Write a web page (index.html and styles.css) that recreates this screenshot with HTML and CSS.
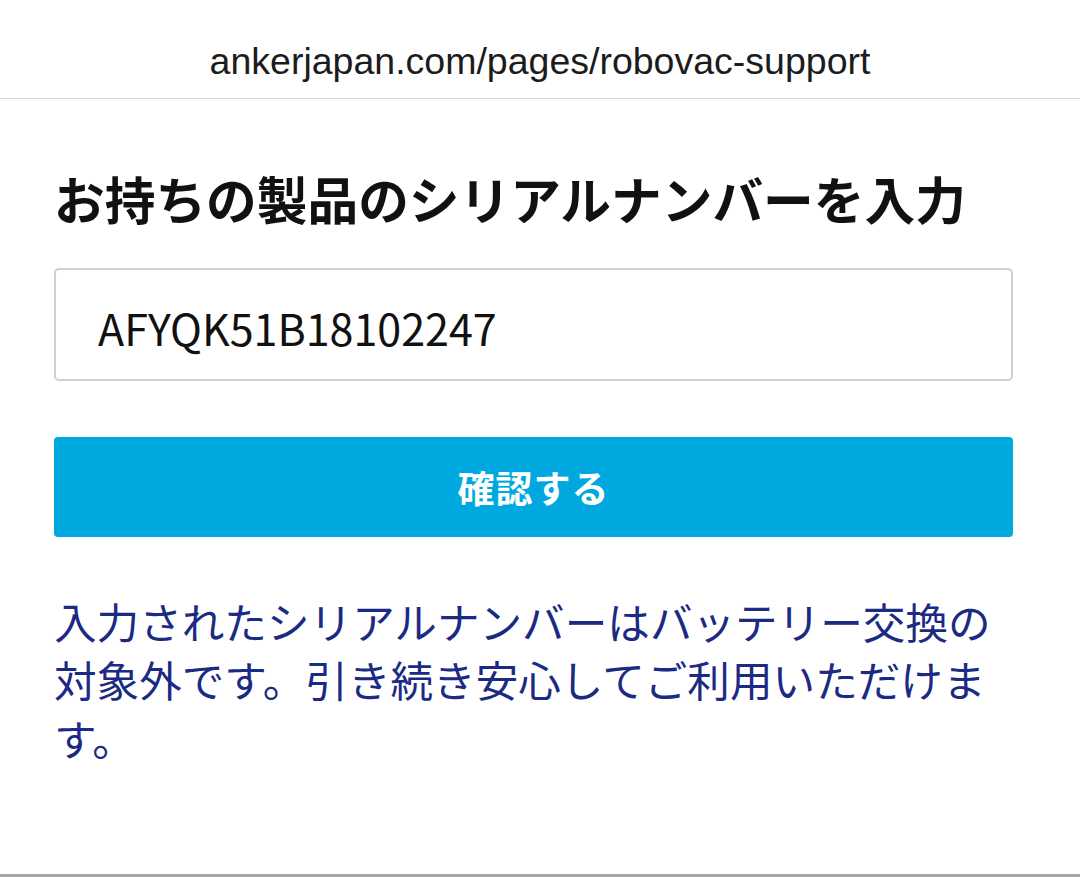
FILE: index.html
```html
<!DOCTYPE html>
<html lang="ja">

<head>
    <meta charset="UTF-8" />
    <meta name="viewport" content="width=device-width, initial-scale=1.0" />
    <title>シリアルナンバー確認</title>
    <link rel="stylesheet" href="styles.css">
</head>

<body>
    <div class="address-bar">ankerjapan.com/pages/robovac-support</div>

    <div class="container">
        <h1>お持ちの製品のシリアルナンバーを入力</h1>

        <div class="input-group">
            <input type="text" id="serial" value="AFYQK51B18102247" />
        </div>

        <button id="submit">確認する</button>

        <p class="result">入力されたシリアルナンバーはバッテリー交換の対象外です。引き続き安心してご利用いただけます。</p>
    </div>
</body>

</html>
```

FILE: styles.css
```css
html,
body {
    overflow: hidden;
}

body {
    margin: 0;
    height: 877px;
    box-sizing: border-box;
    border-bottom: 3px solid #a8a8a8;
    background-color: white;
    font-family: "Noto Sans CJK JP", "Noto Sans", sans-serif;
}

.address-bar {
    height: 99px;
    box-sizing: border-box;
    border-bottom: 1px solid #d6d6d6;
    text-align: center;
    font-family: "Liberation Sans", Arial, sans-serif;
    font-size: 37.5px;
    line-height: 122px;
    color: #1c1c1c;
    overflow: hidden;
}

.container {
    padding: 0 67px 0 54px;
}

h1 {
    margin: 69px 0 0;
    font-size: 50.7px;
    font-weight: bold;
    line-height: 1.2;
    color: #111;
    white-space: nowrap;
}

.input-group {
    margin-top: 39px;
}

input {
    width: 100%;
    height: 113px;
    box-sizing: border-box;
    padding: 5px 0 0 42px;
    border: 2px solid #cfcfcf;
    border-radius: 5px;
    font-family: "Noto Sans CJK JP", "Noto Sans", sans-serif;
    font-size: 43px;
    color: #111;
    background-color: white;
}

button {
    display: block;
    width: 100%;
    height: 100px;
    margin-top: 56px;
    border: none;
    border-radius: 4px;
    background-color: #00a8e0;
    color: white;
    font-family: "Noto Sans CJK JP", sans-serif;
    font-size: 37px;
    font-weight: bold;
    letter-spacing: 1px;
    cursor: pointer;
}

.result {
    margin: 55px 0 0;
    font-size: 42.6px;
    line-height: 58.5px;
    color: #1b2a82;
}
```
